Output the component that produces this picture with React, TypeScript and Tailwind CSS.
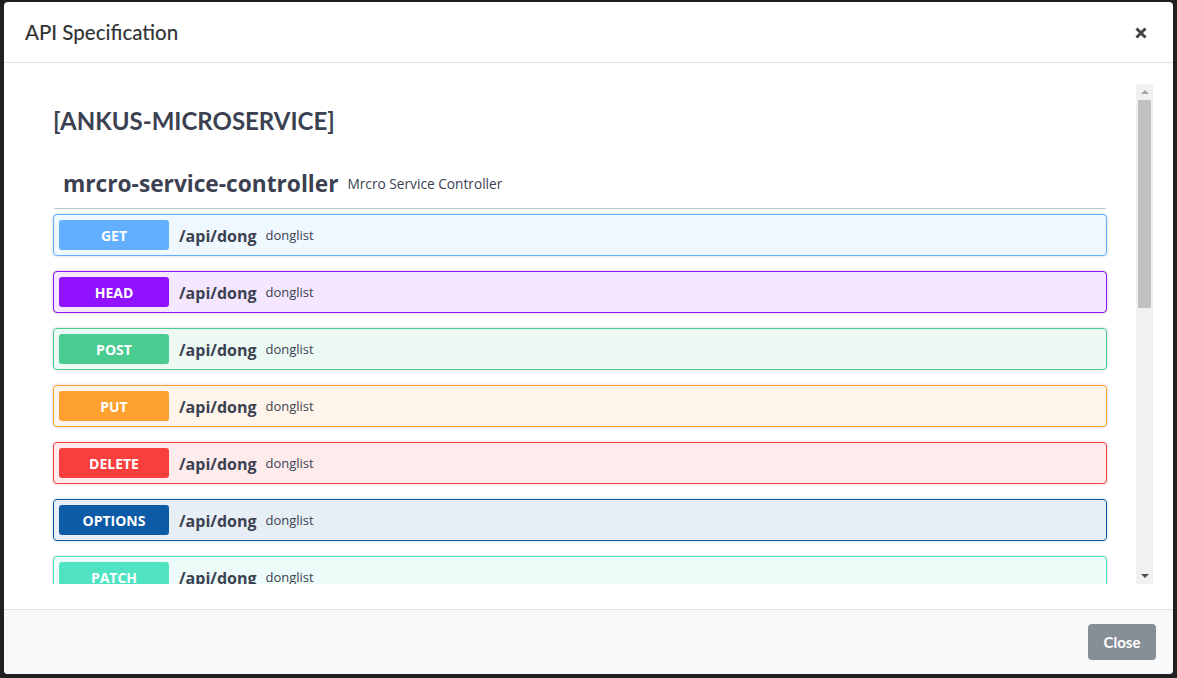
const methods = [
  { name: "GET", color: "bg-[#61affe]", border: "border-[#61affe]", bg: "bg-[#eff7ff]" },
  { name: "HEAD", color: "bg-[#9012fe]", border: "border-[#9012fe]", bg: "bg-[#f4e7ff]" },
  { name: "POST", color: "bg-[#49cc90]", border: "border-[#49cc90]", bg: "bg-[#edfaf4]" },
  { name: "PUT", color: "bg-[#fca130]", border: "border-[#fca130]", bg: "bg-[#fff5ea]" },
  { name: "DELETE", color: "bg-[#f93e3e]", border: "border-[#f93e3e]", bg: "bg-[#feebeb]" },
  { name: "OPTIONS", color: "bg-[#0d5aa7]", border: "border-[#0d5aa7]", bg: "bg-[#e7eef6]" },
  { name: "PATCH", color: "bg-[#50e3c2]", border: "border-[#50e3c2]", bg: "bg-[#edfcf9]" },
];

function Operation({ m }: { m: (typeof methods)[number] }) {
  return (
    <div
      className={`flex shrink-0 items-center rounded-[4px] border p-[5px] shadow-[0_0_3px_rgba(0,0,0,0.19)] ${m.border} ${m.bg}`}
    >
      <div
        className={`flex h-[30px] w-[110px] items-center justify-center rounded-[3px] text-[14px] font-bold text-white ${m.color}`}
      >
        {m.name}
      </div>
      <span className="ml-[10px] mt-[1px] text-[16px] font-bold text-[#3b4151]">/api/dong</span>
      <span className="ml-[9px] mt-[1px] text-[13px] text-[#3b4151]">donglist</span>
    </div>
  );
}

export default function App() {
  return (
    <div className="h-[678px] w-full bg-[#202020] pl-[4px] pt-[2px] font-['Open_Sans',sans-serif]">
      <div className="flex h-[672px] w-[1169px] flex-col overflow-hidden rounded-[4px] bg-white">
        <div className="flex h-[61px] shrink-0 items-center justify-between border-b border-[#dee2e6] pl-[21px] pr-[26px]">
          <h1 className="font-['Lato',sans-serif] text-[20.5px] font-medium text-[#333]">API Specification</h1>
          <svg width="12" height="12" viewBox="0 0 12 12" className="mt-[2px]">
            <path d="M1.5 1.5 L10.5 10.5 M10.5 1.5 L1.5 10.5" stroke="#444" strokeWidth="3" />
          </svg>
        </div>

        <div className="flex h-[546px] shrink-0 px-[20px] pb-[25px] pt-[21px]">
          <div className="flex h-full flex-1 overflow-hidden">
            <div className="flex flex-1 flex-col overflow-hidden pl-[29px] pr-[29px]">
              <h2 className="mt-[22px] h-[30px] font-['Lato',sans-serif] text-[24px] font-bold leading-[30px] text-[#3b4151]">
                [ANKUS-MICROSERVICE]
              </h2>
              <div className="mx-px mt-[24px] flex h-[49px] shrink-0 items-center border-b border-[#c4c6cb] pl-[9px]">
                <span className="text-[22.7px] font-bold text-[#3b4151]">mrcro-service-controller</span>
                <span className="ml-[9px] mt-[1px] text-[13.7px] text-[#3b4151]">Mrcro Service Controller</span>
              </div>
              <div className="mt-[5px] flex flex-col gap-[15px]">
                {methods.map((m) => (
                  <Operation key={m.name} m={m} />
                ))}
              </div>
            </div>
            <div className="flex w-[17px] shrink-0 flex-col items-center bg-[#f1f1f1]">
              <svg width="8" height="16" viewBox="0 0 8 16">
                <path d="M0 10 L4 6 L8 10 Z" fill="#a3a3a3" />
              </svg>
              <div className="h-[208px] w-[13px] bg-[#c1c1c1]" />
              <div className="flex-1" />
              <svg width="8" height="16" viewBox="0 0 8 16">
                <path d="M0 6 L4 10 L8 6 Z" fill="#505050" />
              </svg>
            </div>
          </div>
        </div>

        <div className="flex flex-1 items-center justify-end border-t border-[#dee2e6] bg-[#f8f9fa] pr-[17px]">
          <button className="h-[36px] w-[68px] rounded-[4px] bg-[#868e96] font-['Lato',sans-serif] text-[15px] font-bold text-white">
            Close
          </button>
        </div>
      </div>
    </div>
  );
}
